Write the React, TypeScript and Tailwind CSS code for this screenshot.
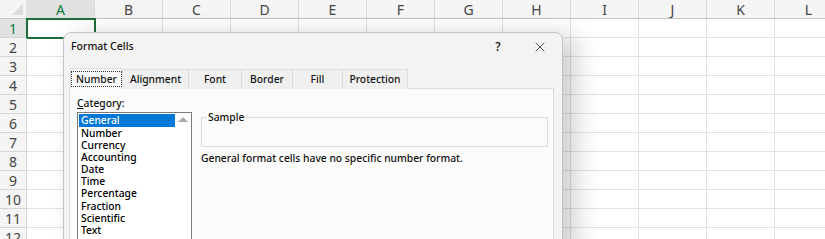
import React from 'react';
import { X } from 'lucide-react';

const columns = ['A', 'B', 'C', 'D', 'E', 'F', 'G', 'H', 'I', 'J', 'K', 'L'];
const rows = [1, 2, 3, 4, 5, 6, 7, 8, 9, 10, 11, 12];
const tabs = ['Number', 'Alignment', 'Font', 'Border', 'Fill', 'Protection'];
const tabWidths = ['w-[53px]', 'w-[67px]', 'w-[54px]', 'w-[52px]', 'w-[51px]', 'w-[66px]'];
const categories = [
  'General', 'Number', 'Currency', 'Accounting', 'Date', 'Time',
  'Percentage', 'Fraction', 'Scientific', 'Text',
];

const Sheet = () => (
  <div className="flex flex-col font-['Noto_Sans',sans-serif]">
    {/* Column headers */}
    <div className="flex h-[19px] bg-[#f5f5f5] border-b border-[#c6c6c6]">
      <div className="relative w-[27px] shrink-0 border-r border-[#dadada]">
        <div className="absolute right-[3px] bottom-[3px] w-0 h-0 border-l-[11px] border-l-transparent border-b-[11px] border-b-[#dcdcdc]" />
      </div>
      {columns.map((c) => (
        <div
          key={c}
          className={`w-[68px] shrink-0 flex items-center justify-center border-r border-[#dadada] text-[14px] ${
            c === 'A' ? 'bg-[#e1e1e1] text-[#107c41]' : 'text-[#444]'
          }`}
        >
          {c}
        </div>
      ))}
    </div>
    {/* Rows */}
    {rows.map((r) => (
      <div key={r} className="flex h-[19px]">
        <div
          className={`w-[27px] shrink-0 flex items-center justify-center border-r border-b border-[#d6d6d6] text-[14px] ${
            r === 1 ? 'bg-[#e1e1e1] text-[#107c41]' : 'bg-[#f5f5f5] text-[#444]'
          }`}
        >
          {r}
        </div>
        {columns.map((c) => (
          <div
            key={c}
            className={`w-[68px] shrink-0 border-r border-b border-[#e1e1e1] ${
              r === 1 && c === 'A' ? 'outline-2 outline-[#1e6e3c] -outline-offset-1' : ''
            }`}
          />
        ))}
      </div>
    ))}
  </div>
);

const FormatCellsDialog = () => (
  <div className="absolute left-[63px] top-[32px] w-[500px] h-[230px] rounded-t-[8px] bg-[#f3f3f3] border border-[#c4c4c4] shadow-[12px_4px_26px_rgba(0,0,0,0.2)] font-['Noto_Sans',sans-serif] font-medium text-[#111]">
    {/* Title bar */}
    <div className="flex items-center h-[28px] pl-[7px] pr-[14px] text-[10.5px]">
      <span className="flex-1">Format Cells</span>
      <span className="w-[20px] text-center text-[12px] mr-[24px]">?</span>
      <X size={16} strokeWidth={1.2} className="text-[#222]" />
    </div>

    {/* Tabs */}
    <div className="flex mt-[8px] ml-[6px] h-[20px] items-end">
      {tabs.map((t, i) => (
        <div
          key={t}
          className={`${tabWidths[i]} h-[20px] flex items-center justify-center text-[10.3px] border border-b-0 border-[#dcdcdc] ${
            i === 0 ? 'bg-[#fbfbfb] relative z-10 h-[21px]' : 'bg-[#f0f0f0] -ml-px'
          }`}
        >
          {i === 0 ? (
            <span className="px-[4px] border border-dotted border-[#333] leading-[14px]">{t}</span>
          ) : (
            t
          )}
        </div>
      ))}
    </div>

    {/* Tab panel */}
    <div className="ml-[5px] w-[485px] h-[160px] -mt-px bg-[#fbfbfb] border border-[#dcdcdc] flex pt-[7px] pl-[7px]">
      <div className="flex flex-col w-[115px]">
        <div className="text-[10.3px] leading-[14px] h-[17px]">
          <span className="underline">C</span>ategory:
        </div>
        <div className="w-[115px] h-[140px] bg-white border border-[#7a7a7a] flex">
          <div className="flex-1 flex flex-col pt-px pl-px">
            {categories.map((c, i) => (
              <div
                key={c}
                className={`h-[12.2px] leading-[12px] text-[10.3px] pl-[2px] ${
                  i === 0 ? 'bg-[#0078d7] text-white' : 'text-black'
                }`}
              >
                {c}
              </div>
            ))}
          </div>
          <div className="w-[16px] flex justify-center pt-[4px]">
            <div className="w-0 h-0 border-l-[5px] border-l-transparent border-r-[5px] border-r-transparent border-b-[5px] border-b-[#a8a8a8]" />
          </div>
        </div>
      </div>

      <div className="flex flex-col ml-[9px] mt-[21px] w-[347px]">
        <div className="relative h-[30px] border border-[#dcdcdc]">
          <span className="absolute -top-[8px] left-[5px] px-px bg-[#fbfbfb] text-[10.3px] leading-[14px]">
            Sample
          </span>
        </div>
        <div className="mt-[4px] text-[10.3px] leading-[14px]">
          General format cells have no specific number format.
        </div>
      </div>
    </div>
  </div>
);

export default function App() {
  return (
    <div className="relative w-[825px] h-[239px] overflow-hidden bg-white">
      <Sheet />
      <FormatCellsDialog />
    </div>
  );
}
